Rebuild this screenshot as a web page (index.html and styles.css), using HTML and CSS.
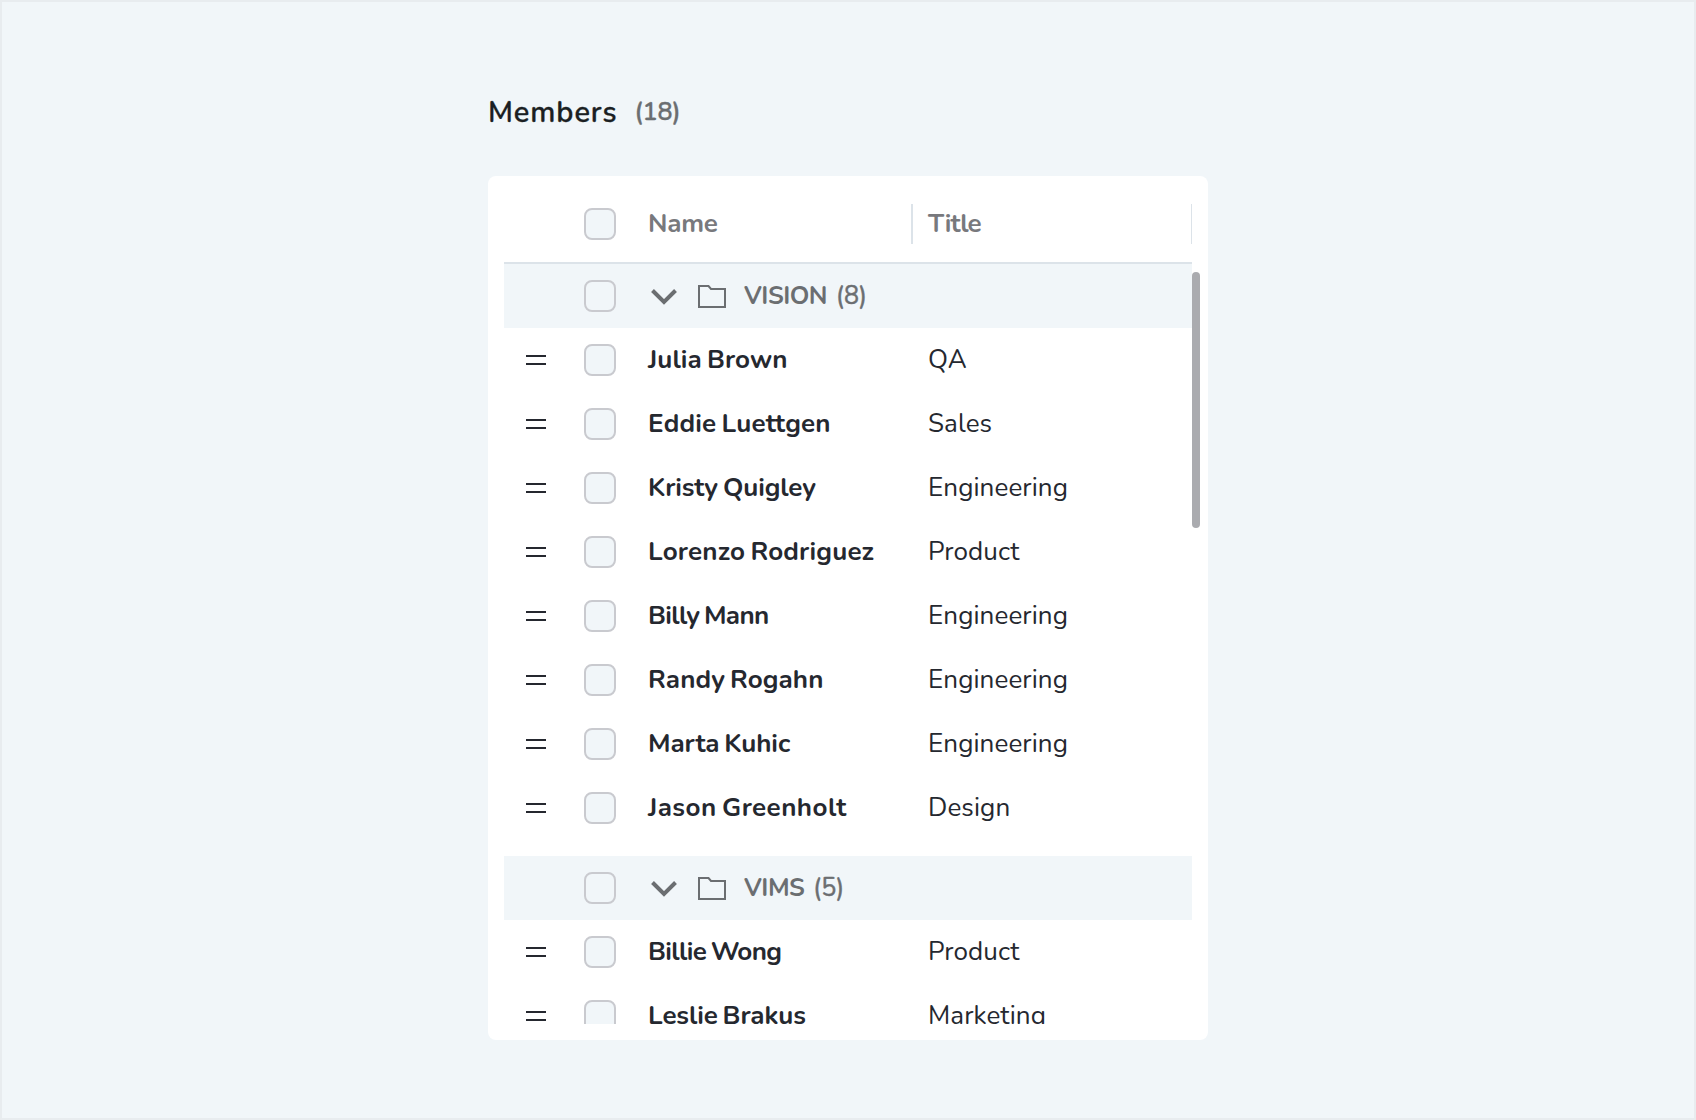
FILE: index.html
```html
<!DOCTYPE html>
<html lang="en">
<head>
  <meta charset="UTF-8" />
  <meta name="viewport" content="width=device-width, initial-scale=1.0"/>
  <title>Members</title>
  <link rel="stylesheet" href="styles.css">
</head>
<body>
  <svg class="sprite" width="0" height="0">
    <symbol id="chevron" viewBox="0 0 32 32">
      <path d="M4.5 10.5 L16 22 L27.5 10.5" fill="none" stroke="currentColor" stroke-width="4"/>
    </symbol>
    <symbol id="folder" viewBox="0 0 32 32">
      <path d="M3 6 H12.5 L15 9 H29 V27 H3 Z" fill="none" stroke="currentColor" stroke-width="2"/>
    </symbol>
  </svg>

  <div class="container">
    <h1>Members <span class="total">(18)</span></h1>

    <div class="card">
      <div class="row header">
        <span class="check"></span>
        <span class="name">Name</span>
        <span class="title">Title</span>
      </div>

      <div class="list" id="list"></div>
      <div class="scrollbar"></div>
    </div>
  </div>

  <script>
    // third value: letter spacing class of the name
    const groups = [
      {
        name: 'VISION', count: 8, members: [
          ['Julia Brown', 'QA', 'regular'],
          ['Eddie Luettgen', 'Sales', 'loose'],
          ['Kristy Quigley', 'Engineering', 'snug'],
          ['Lorenzo Rodriguez', 'Product', 'loose'],
          ['Billy Mann', 'Engineering', 'tight'],
          ['Randy Rogahn', 'Engineering', 'regular'],
          ['Marta Kuhic', 'Engineering', 'snug'],
          ['Jason Greenholt', 'Design', 'wide']
        ]
      },
      {
        name: 'VIMS', count: 5, members: [
          ['Billie Wong', 'Product', 'tight'],
          ['Leslie Brakus', 'Marketing', 'snug']
        ]
      }
    ];

    document.getElementById('list').innerHTML = groups.map(group => `
      <div class="group">
        <div class="row group-row">
          <span class="check"></span>
          <svg class="chevron"><use href="#chevron"/></svg>
          <svg class="folder"><use href="#folder"/></svg>
          <span class="group-name">${group.name}</span>
          <span class="group-count">(${group.count})</span>
        </div>
        ${group.members.map(([name, title, spacing]) => `
          <div class="row">
            <span class="drag"></span>
            <span class="check"></span>
            <span class="name ${spacing}">${name}</span>
            <span class="title">${title}</span>
          </div>`).join('')}
      </div>`).join('');
  </script>
</body>
</html>
```
FILE: styles.css
```css
* {
  box-sizing: border-box;
}

body {
  margin: 0;
  height: 100vh;
  overflow: hidden;
  background: #f1f6f9;
  border: 2px solid #e8ecef;
  font-family: Nunito, Lato, sans-serif;
  font-size: 26px;
  color: #25282f;
}

.sprite {
  display: block;
}

.container {
  width: 720px;
  margin: 0 auto;
  padding-top: 86px;
}

h1 {
  display: flex;
  align-items: center;
  gap: 17px;
  height: 48px;
  margin: 0 0 40px;
  font-size: 29px;
  font-weight: 600;
  letter-spacing: 0.9px;
  color: #1b1f23;
  -webkit-text-stroke: 0.3px currentColor;
}

.total {
  padding-bottom: 1px;
  font-size: 25px;
  letter-spacing: -0.2px;
  color: #6b6e71;
}

.card {
  position: relative;
  height: 864px;
  padding: 16px;
  background: white;
  border-radius: 8px;
}

.row {
  display: flex;
  align-items: center;
  height: 64px;
  padding-left: 22px;
  white-space: nowrap;
}

.header {
  height: 72px;
  padding: 0 0 6px 80px;
  border-bottom: 2px solid #dce3e9;
  color: #78797d;
  font-weight: bold;
}

.list {
  height: 760px;
  overflow: hidden;
}

.group {
  margin-bottom: 16px;
}

.group-row {
  padding-left: 80px;
  background: #f1f6f9;
  color: #6b6e71;
  font-size: 25px;
}

.drag {
  width: 20px;
  height: 10px;
  margin-right: 38px;
  border: solid #25282f;
  border-width: 2px 0;
}

.check {
  flex: none;
  width: 32px;
  height: 32px;
  margin-right: 32px;
  background: #f1f6f9;
  border: 2px solid #c9cacf;
  border-radius: 8px;
}

.name {
  width: 280px;
  padding-bottom: 2px;
  font-weight: bold;
  word-spacing: -2px;
}

.name.regular {
  letter-spacing: 0.1px;
}

.name.snug {
  letter-spacing: -0.1px;
}

.name.tight {
  letter-spacing: -0.6px;
}

.name.loose {
  letter-spacing: 0.2px;
}

.name.wide {
  letter-spacing: 0.45px;
}

.title {
  padding-bottom: 2px;
  letter-spacing: 0.1px;
}

.header .name {
  width: 263px;
  letter-spacing: -0.2px;
}

.header .title {
  display: flex;
  align-items: center;
  flex: 1;
  height: 40px;
  padding-left: 15px;
  border-left: 2px solid #dce3e9;
  border-right: 1px solid #dce3e9;
  letter-spacing: -0.8px;
}

.chevron,
.folder {
  flex: none;
  width: 32px;
  height: 32px;
}

.folder {
  margin: 0 16px;
}

.group-name {
  font-weight: bold;
  letter-spacing: -0.5px;
}

.group-count {
  margin-left: 9px;
  -webkit-text-stroke: 0.5px currentColor;
}

/* sits over the right edge of the list */
.scrollbar {
  position: absolute;
  top: 96px;
  right: 8px;
  width: 8px;
  height: 256px;
  background: #aaabaf;
  border-radius: 4px;
}
```
